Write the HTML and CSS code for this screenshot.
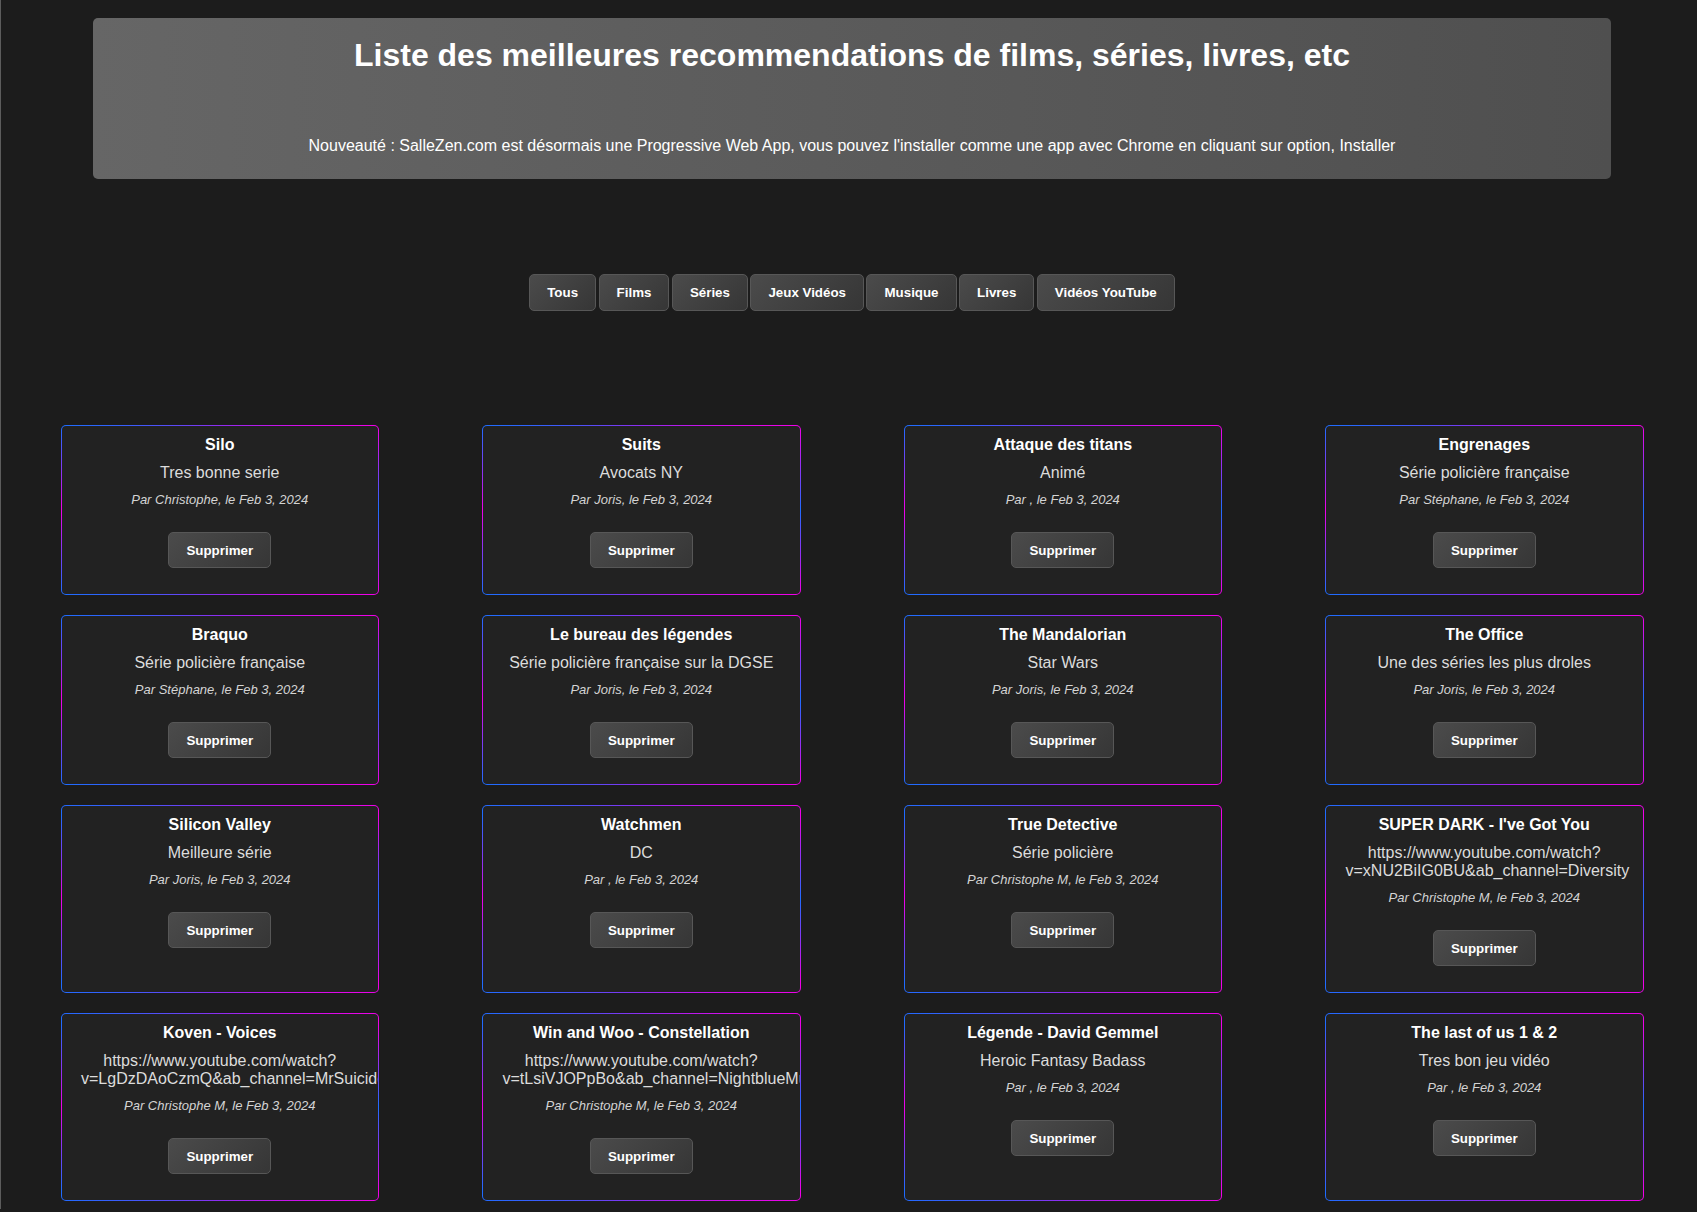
FILE: index.html
```html
<!DOCTYPE html>
<html lang="fr">
<head>
<meta charset="utf-8">
<title>SalleZen - Recommandations</title>
<link rel="stylesheet" href="styles.css">
</head>
<body>
<div class="page">
  <header class="hero">
    <h1 class="hero-title">Liste des meilleures recommendations de films, séries, livres, etc</h1>
    <p class="hero-note">Nouveauté : SalleZen.com est désormais une Progressive Web App, vous pouvez l'installer comme une app avec Chrome en cliquant sur option, Installer</p>
  </header>

  <nav class="tabs">
    <button class="tab">Tous</button>
    <button class="tab">Films</button>
    <button class="tab">Séries</button>
    <button class="tab">Jeux Vidéos</button>
    <button class="tab">Musique</button>
    <button class="tab">Livres</button>
    <button class="tab">Vidéos YouTube</button>
  </nav>

  <main class="grid">
    <article class="card">
      <h3 class="card-title">Silo</h3>
      <p class="card-desc">Tres bonne serie</p>
      <p class="card-meta">Par Christophe, le Feb 3, 2024</p>
      <button class="btn">Supprimer</button>
    </article>
    <article class="card">
      <h3 class="card-title">Suits</h3>
      <p class="card-desc">Avocats NY</p>
      <p class="card-meta">Par Joris, le Feb 3, 2024</p>
      <button class="btn">Supprimer</button>
    </article>
    <article class="card">
      <h3 class="card-title">Attaque des titans</h3>
      <p class="card-desc">Animé</p>
      <p class="card-meta">Par , le Feb 3, 2024</p>
      <button class="btn">Supprimer</button>
    </article>
    <article class="card">
      <h3 class="card-title">Engrenages</h3>
      <p class="card-desc">Série policière française</p>
      <p class="card-meta">Par Stéphane, le Feb 3, 2024</p>
      <button class="btn">Supprimer</button>
    </article>

    <article class="card">
      <h3 class="card-title">Braquo</h3>
      <p class="card-desc">Série policière française</p>
      <p class="card-meta">Par Stéphane, le Feb 3, 2024</p>
      <button class="btn">Supprimer</button>
    </article>
    <article class="card">
      <h3 class="card-title">Le bureau des légendes</h3>
      <p class="card-desc">Série policière française sur la DGSE</p>
      <p class="card-meta">Par Joris, le Feb 3, 2024</p>
      <button class="btn">Supprimer</button>
    </article>
    <article class="card">
      <h3 class="card-title">The Mandalorian</h3>
      <p class="card-desc">Star Wars</p>
      <p class="card-meta">Par Joris, le Feb 3, 2024</p>
      <button class="btn">Supprimer</button>
    </article>
    <article class="card">
      <h3 class="card-title">The Office</h3>
      <p class="card-desc">Une des séries les plus droles</p>
      <p class="card-meta">Par Joris, le Feb 3, 2024</p>
      <button class="btn">Supprimer</button>
    </article>

    <article class="card">
      <h3 class="card-title">Silicon Valley</h3>
      <p class="card-desc">Meilleure série</p>
      <p class="card-meta">Par Joris, le Feb 3, 2024</p>
      <button class="btn">Supprimer</button>
    </article>
    <article class="card">
      <h3 class="card-title">Watchmen</h3>
      <p class="card-desc">DC</p>
      <p class="card-meta">Par , le Feb 3, 2024</p>
      <button class="btn">Supprimer</button>
    </article>
    <article class="card">
      <h3 class="card-title">True Detective</h3>
      <p class="card-desc">Série policière</p>
      <p class="card-meta">Par Christophe M, le Feb 3, 2024</p>
      <button class="btn">Supprimer</button>
    </article>
    <article class="card">
      <h3 class="card-title">SUPER DARK - I've Got You</h3>
      <p class="card-desc">https://www.youtube.com/watch?<wbr>v=xNU2BiIG0BU&amp;ab_channel=Diversity</p>
      <p class="card-meta">Par Christophe M, le Feb 3, 2024</p>
      <button class="btn">Supprimer</button>
    </article>

    <article class="card">
      <h3 class="card-title">Koven - Voices</h3>
      <p class="card-desc">https://www.youtube.com/watch?<wbr>v=LgDzDAoCzmQ&amp;ab_channel=MrSuicideSheep</p>
      <p class="card-meta">Par Christophe M, le Feb 3, 2024</p>
      <button class="btn">Supprimer</button>
    </article>
    <article class="card">
      <h3 class="card-title">Win and Woo - Constellation</h3>
      <p class="card-desc">https://www.youtube.com/watch?<wbr>v=tLsiVJOPpBo&amp;ab_channel=NightblueMusic</p>
      <p class="card-meta">Par Christophe M, le Feb 3, 2024</p>
      <button class="btn">Supprimer</button>
    </article>
    <article class="card">
      <h3 class="card-title">Légende - David Gemmel</h3>
      <p class="card-desc">Heroic Fantasy Badass</p>
      <p class="card-meta">Par , le Feb 3, 2024</p>
      <button class="btn">Supprimer</button>
    </article>
    <article class="card">
      <h3 class="card-title">The last of us 1 &amp; 2</h3>
      <p class="card-desc">Tres bon jeu vidéo</p>
      <p class="card-meta">Par , le Feb 3, 2024</p>
      <button class="btn">Supprimer</button>
    </article>
  </main>
</div>
</body>
</html>
```
FILE: styles.css
```css
html {
  background: #1c1c1c;
  border-left: 1px solid #5c5c5c;
}

body {
  margin: 8px 2px 8px 8px;
  font-family: "Liberation Sans", Arial, sans-serif;
  color: #fff;
}

.page {
  display: flex;
  flex-direction: column;
  align-items: center;
}

.hero {
  width: 90%;
  box-sizing: border-box;
  margin-top: 10px;
  padding: 19px 20px 24px;
  border-radius: 5px;
  background: linear-gradient(to right, #666666, #4f4f4f);
  text-align: center;
}

.hero-title {
  margin: 0 0 63px;
  font-size: 32px;
  font-weight: bold;
  color: #fff;
}

.hero-note {
  margin: 0;
  font-size: 16px;
  color: #fff;
}

.tabs {
  display: flex;
  gap: 2.5px;
  margin-top: 95px;
}

.tab,
.btn {
  font-family: "Liberation Sans", Arial, sans-serif;
  font-size: 13.333px;
  font-weight: bold;
  color: #fff;
  padding: 10px 17px;
  border: 1px solid #575757;
  border-radius: 5px;
  background: linear-gradient(135deg, #4b4b4b, #363636);
  cursor: pointer;
}

.grid {
  align-self: stretch;
  display: grid;
  grid-template-columns: repeat(4, 318.5px);
  justify-content: space-around;
  row-gap: 20px;
  margin-top: 114px;
}

.card {
  box-sizing: border-box;
  padding: 10px 19.5px 26px;
  border: 1px solid transparent;
  border-radius: 5px;
  overflow: hidden;
  text-align: center;
  background:
    linear-gradient(#222222, #222222) padding-box,
    conic-gradient(from 0deg,
      #8f2cf0 0deg,
      #f000e8 62deg,
      #1f6cff 90deg,
      #f000e8 118deg,
      #8f2cf0 180deg,
      #1f6cff 242deg,
      #f000e8 270deg,
      #1f6cff 298deg,
      #8f2cf0 360deg) border-box;
}

.card-title {
  margin: 0;
  font-size: 16px;
  font-weight: bold;
  color: #fff;
}

.card-desc {
  margin: 9.5px 0 0;
  font-size: 16px;
  color: #dcdcdc;
}

.card-meta {
  margin: 10px 0 0;
  font-size: 13px;
  font-style: italic;
  color: #d4d4d4;
}

.btn {
  margin-top: 25.5px;
  padding-top: 9.5px;
  padding-bottom: 9.5px;
}
```
